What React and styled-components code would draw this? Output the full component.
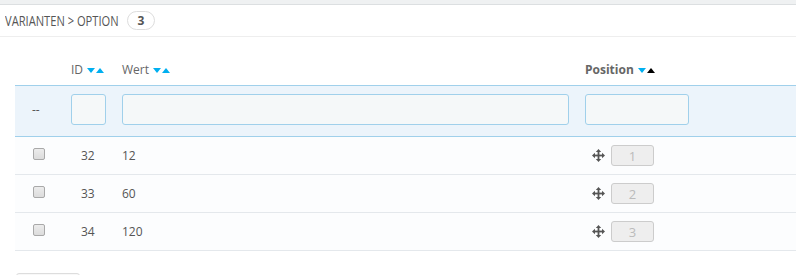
import React from 'react';
import styled, { createGlobalStyle } from 'styled-components';

const GlobalStyle = createGlobalStyle`
  html, body {
    margin: 0;
    padding: 0;
    background: #eff1f2;
    font-family: "Open Sans", "Liberation Sans", sans-serif;
    font-size: 12px;
    color: #555;
    overflow: hidden;
  }
`;

const Panel = styled.div`
  margin-top: 4px;
  background: #fff;
  border-top: 1px solid #dcdfe1;
  height: 271px;
`;

const PanelHeading = styled.div`
  display: flex;
  align-items: center;
  height: 31px;
  padding-left: 5px;
  border-bottom: 1px solid #eee;
`;

const TitleBox = styled.span`
  display: inline-block;
  width: 113px;
  white-space: nowrap;
`;

const Title = styled.span`
  display: inline-block;
  font-family: "Open Sans", sans-serif;
  font-size: 14px;
  text-transform: uppercase;
  color: #555;
  transform: scaleX(0.795);
  transform-origin: left center;
`;

const Badge = styled.span`
  display: inline-flex;
  align-items: center;
  justify-content: center;
  margin-left: 9px;
  width: 26px;
  height: 17px;
  border: 1px solid #ddd;
  border-radius: 10px;
  font-weight: 700;
  font-size: 12px;
  color: #555;
`;

const Table = styled.table`
  margin: 16px 0 0 15px;
  width: calc(100% - 15px);
  border-collapse: collapse;
  table-layout: fixed;
`;

const HeadCell = styled.th`
  height: 32px;
  padding: 0 0 0 8px;
  text-align: left;
  font-weight: ${p => (p.$active ? 700 : 400)};
  color: #666;
  white-space: nowrap;
  vertical-align: middle;
`;

const Arrow = styled.span`
  display: inline-block;
  width: 0;
  height: 0;
  margin-left: ${p => (p.$first ? 4 : 1)}px;
  vertical-align: middle;
  border-left: 4px solid transparent;
  border-right: 4px solid transparent;
  ${p => (p.$up
    ? `border-bottom: 5px solid ${p.$on ? '#000' : '#00aff0'};`
    : `border-top: 5px solid ${p.$on ? '#000' : '#00aff0'};`)}
`;

const FilterRow = styled.tr`
  background: #ecf4fb;
  border-top: 1px solid #a0d0eb;
  border-bottom: 1px solid #a0d0eb;
`;

const FilterCell = styled.td`
  height: 51px;
  box-sizing: border-box;
  padding: 8px ${p => p.$right ?? 0}px 0 ${p => p.$pad ?? 8}px;
  vertical-align: top;
`;

const Dash = styled.span`
  display: block;
  padding: 7px 0 0 17px;
  color: #555;
`;

const FilterInput = styled.input`
  display: block;
  box-sizing: border-box;
  width: ${p => (p.$w ? `${p.$w}px` : '100%')};
  height: 31px;
  background: #f5f8f9;
  border: 1px solid #a0d0eb;
  border-radius: 3px;
  outline: none;
`;

const Row = styled.tr`
  background: #fcfdfe;
  border-bottom: 1px solid #e4e8ec;
`;

const Cell = styled.td`
  height: 37px;
  padding: 0 0 0 ${p => p.$pad ?? 8}px;
  vertical-align: middle;
  color: #555;
`;

const Check = styled.span`
  display: block;
  margin-left: 18px;
  margin-top: -4px;
  box-sizing: border-box;
  width: 12px;
  height: 12px;
  border: 1px solid #a9a9a9;
  border-radius: 2px;
  background: linear-gradient(#ececec, #dcdcdc);
`;

const PosWrap = styled.div`
  display: flex;
  align-items: center;
  padding-left: 7px;
  gap: 6px;
`;

const PosBox = styled.span`
  display: inline-flex;
  align-items: center;
  justify-content: center;
  box-sizing: border-box;
  width: 43px;
  height: 21px;
  background: #eee;
  border: 1px solid #ccc;
  border-radius: 3px;
  color: #bbb;
  font-size: 13px;
`;

const Bulk = styled.div`
  margin: 22px 0 0 16px;
  width: 62px;
  height: 20px;
  border: 1px solid #ddd;
  border-radius: 3px;
  background: #f8f8f8;
`;

const MoveIcon = () => (
  <svg width="13" height="13" viewBox="0 0 13 13">
    <g fill="#555">
      <rect x="5.6" y="2" width="1.8" height="9" />
      <rect x="2" y="5.6" width="9" height="1.8" />
      <path d="M6.5 0 L9.2 3 L3.8 3 Z" />
      <path d="M6.5 13 L9.2 10 L3.8 10 Z" />
      <path d="M0 6.5 L3 3.8 L3 9.2 Z" />
      <path d="M13 6.5 L10 3.8 L10 9.2 Z" />
    </g>
  </svg>
);

const rows = [
  { id: 32, value: '12', pos: 1 },
  { id: 33, value: '60', pos: 2 },
  { id: 34, value: '120', pos: 3 },
];

export default function App() {
  return (
    <>
      <GlobalStyle />
      <Panel>
        <PanelHeading>
          <TitleBox><Title>Varianten &gt; Option</Title></TitleBox>
          <Badge>3</Badge>
        </PanelHeading>
        <Table>
          <colgroup>
            <col style={{ width: 48 }} />
            <col style={{ width: 51 }} />
            <col style={{ width: 463 }} />
            <col />
          </colgroup>
          <thead>
            <tr>
              <HeadCell />
              <HeadCell>ID<Arrow $first /><Arrow $up /></HeadCell>
              <HeadCell>Wert<Arrow $first /><Arrow $up /></HeadCell>
              <HeadCell $active>Position<Arrow $first /><Arrow $up $on /></HeadCell>
            </tr>
            <FilterRow>
              <FilterCell $pad={0}><Dash>--</Dash></FilterCell>
              <FilterCell><FilterInput $w={35} /></FilterCell>
              <FilterCell $right={8}><FilterInput /></FilterCell>
              <FilterCell><FilterInput $w={104} /></FilterCell>
            </FilterRow>
          </thead>
          <tbody>
            {rows.map(r => (
              <Row key={r.id}>
                <Cell $pad={0}><Check /></Cell>
                <Cell $pad={18}>{r.id}</Cell>
                <Cell>{r.value}</Cell>
                <Cell>
                  <PosWrap>
                    <MoveIcon />
                    <PosBox>{r.pos}</PosBox>
                  </PosWrap>
                </Cell>
              </Row>
            ))}
          </tbody>
        </Table>
        <Bulk />
      </Panel>
    </>
  );
}
